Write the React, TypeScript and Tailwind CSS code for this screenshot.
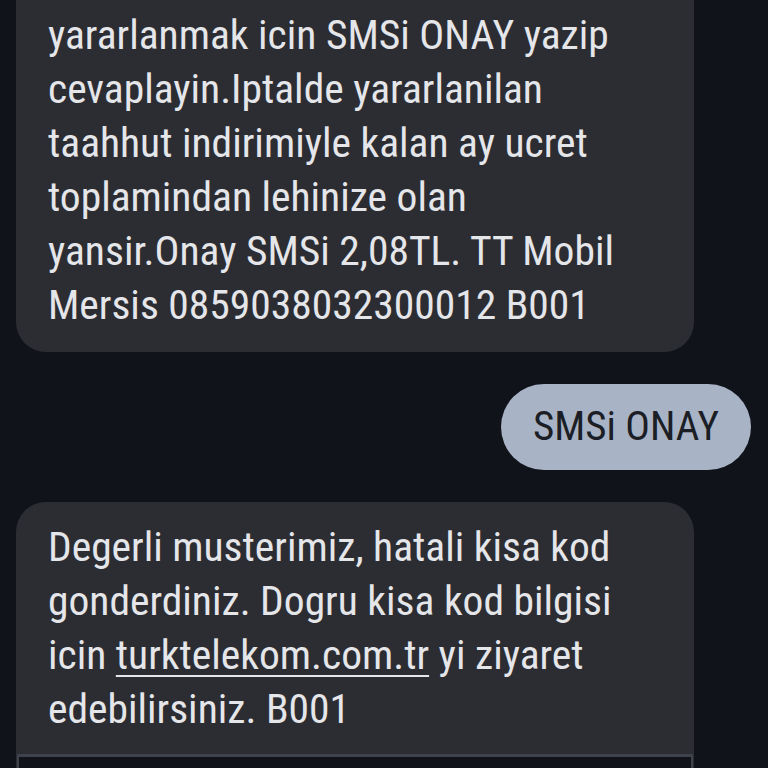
import React from "react";

export default function App() {
  return (
    <div className="w-[768px] h-[768px] overflow-hidden bg-[#10131a] font-['Roboto',sans-serif] font-stretch-condensed">
      <div className="flex flex-col">
        <div className="ml-[16px] w-[678px] -mt-[12px] rounded-b-[30px] bg-[#2c2d32] pl-[32px] pr-[20px] pt-[20px] pb-[20px] text-[41.5px] leading-[54px] text-[#e5e6ea]">
          <div>yararlanmak icin SMSi ONAY yazip</div>
          <div>cevaplayin.Iptalde yararlanilan</div>
          <div>taahhut indirimiyle kalan ay ucret</div>
          <div>toplamindan lehinize olan</div>
          <div>yansir.Onay SMSi 2,08TL. TT Mobil</div>
          <div>Mersis 0859038032300012 B001</div>
        </div>
        <div className="mt-[32px] mr-[17px] self-end h-[86px] rounded-full bg-[#a9b3c6] px-[32px] flex items-center text-[41px] text-[#1b1e25]">
          SMSi ONAY
        </div>
        <div className="mt-[32px] ml-[16px] w-[678px] rounded-t-[30px] bg-[#2c2d32] text-[41.5px] leading-[54px] text-[#e5e6ea] flex flex-col">
          <div className="pl-[32px] pr-[20px] pt-[18px] pb-[18px]">
            <div>Degerli musterimiz, hatali kisa kod</div>
            <div>gonderdiniz. Dogru kisa kod bilgisi</div>
            <div>
              icin <span className="underline decoration-[2px] underline-offset-[6px]">turktelekom.com.tr</span> yi ziyaret
            </div>
            <div>edebilirsiniz. B001</div>
          </div>
          <div className="mx-[1px] h-[60px] border-t-[3px] border-x-[2px] border-[#3d424d] bg-[#10131a]"></div>
        </div>
      </div>
    </div>
  );
}
